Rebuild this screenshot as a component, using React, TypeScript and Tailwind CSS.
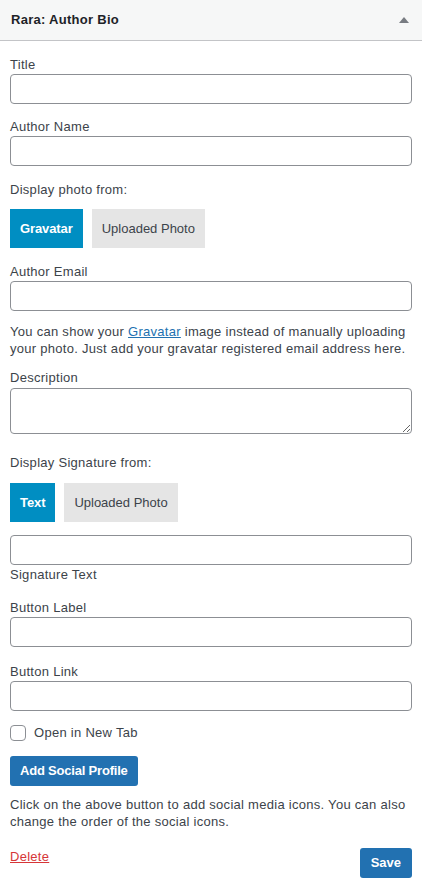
import React, { useState } from 'react';

const Label: React.FC<{ children: React.ReactNode }> = ({ children }) => (
  <label className="block text-[13px] leading-[18px] text-[#3c434a]">{children}</label>
);

const TextInput: React.FC = () => (
  <input
    type="text"
    className="block w-full h-[30px] rounded-[4px] border border-[#8c8f94] bg-white px-2 text-[14px] text-[#2c3338] outline-none"
  />
);

const Toggle: React.FC<{
  options: string[];
  value: string;
  onChange: (v: string) => void;
}> = ({ options, value, onChange }) => (
  <div className="flex gap-[9px]">
    {options.map((o) => (
      <button
        key={o}
        type="button"
        onClick={() => onChange(o)}
        className={`h-[39px] px-[10px] text-[13px] ${
          value === o
            ? 'bg-[#008ec2] text-white font-semibold tracking-[-0.1px]'
            : 'bg-[#e5e5e5] text-[#3c434a] tracking-normal'
        }`}
      >
        {o}
      </button>
    ))}
  </div>
);

export default function App() {
  const [photo, setPhoto] = useState('Gravatar');
  const [sig, setSig] = useState('Text');
  const [newTab, setNewTab] = useState(false);

  return (
    <div className="w-[422px] min-h-[887px] bg-white font-['Liberation_Sans',Arial,sans-serif] tracking-[0.28px]">
      <div className="flex h-[41px] items-center justify-between border-b border-[#c3c4c7] bg-[#f6f7f7] pl-[11px] pr-[13px]">
        <h3 className="text-[13px] font-bold text-[#1d2327]">Rara: Author Bio</h3>
        <svg width="10" height="6" viewBox="0 0 10 6" className="fill-[#787c82]">
          <path d="M5 0 L10 6 L0 6 Z" />
        </svg>
      </div>

      <div className="px-[10px] pt-[15px]">
        <div className="mb-[14px]">
          <Label>Title</Label>
          <TextInput />
        </div>
        <div className="mb-[15px]">
          <Label>Author Name</Label>
          <TextInput />
        </div>
        <div className="mb-[15px]">
          <Label>Display photo from:</Label>
          <div className="mt-[10px]">
            <Toggle options={['Gravatar', 'Uploaded Photo']} value={photo} onChange={setPhoto} />
          </div>
        </div>
        <div className="mb-[12px]">
          <Label>Author Email</Label>
          <TextInput />
        </div>
        <p className="mb-[12px] text-[13px] leading-[17px] text-[#3c434a]">
          You can show your{' '}
          <a href="#" className="text-[#2271b1] underline">
            Gravatar
          </a>{' '}
          image instead of manually uploading your photo. Just add your gravatar registered email address here.
        </p>
        <div className="mb-[20px]">
          <Label>Description</Label>
          <textarea className="mt-[1px] block h-[46px] w-full rounded-[4px] border border-[#8c8f94] bg-white px-2 text-[14px] outline-none" />
        </div>
        <div className="mb-[13px]">
          <Label>Display Signature from:</Label>
          <div className="mt-[11px]">
            <Toggle options={['Text', 'Uploaded Photo']} value={sig} onChange={setSig} />
          </div>
        </div>
        <div className="mb-[15px]">
          <TextInput />
          <div className="mt-[1px] text-[13px] leading-[18px] text-[#3c434a]">Signature Text</div>
        </div>
        <div className="mb-[16px]">
          <Label>Button Label</Label>
          <TextInput />
        </div>
        <div className="mb-[14px]">
          <Label>Button Link</Label>
          <TextInput />
        </div>
        <label
          className="mb-[15px] flex h-[16px] cursor-pointer items-center gap-[8px] text-[13px] text-[#3c434a]"
          onClick={() => setNewTab(!newTab)}
        >
          <span className="block h-[16px] w-[16px] rounded-[4px] border border-[#8c8f94] bg-white" />
          Open in New Tab
        </label>
        <button
          type="button"
          className="mb-[10px] block h-[30px] rounded-[3px] bg-[#2271b1] px-[10px] text-[13px] font-semibold tracking-[-0.2px] text-white"
        >
          Add Social Profile
        </button>
        <p className="text-[13px] leading-[17px] text-[#3c434a]">
          Click on the above button to add social media icons. You can also change the order of the social icons.
        </p>
        <div className="mt-[18px] flex items-start justify-between">
          <a href="#" className="text-[13px] leading-[18px] text-[#d63638] underline">
            Delete
          </a>
          <button
            type="button"
            className="h-[30px] rounded-[3px] bg-[#2271b1] px-[11px] text-[13px] font-semibold tracking-normal text-white"
          >
            Save
          </button>
        </div>
      </div>
    </div>
  );
}
